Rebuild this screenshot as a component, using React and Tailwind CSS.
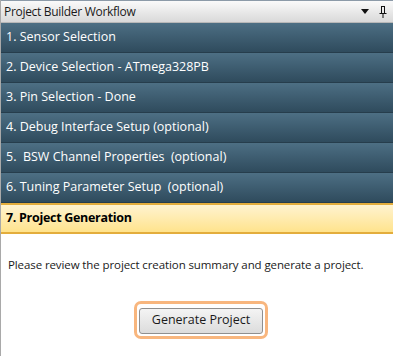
import React from "react";

const STEPS = [
  "1. Sensor Selection",
  "2. Device Selection - ATmega328PB",
  "3. Pin Selection - Done",
  "4. Debug Interface Setup (optional)",
  "5.  BSW Channel Properties  (optional)",
  "6. Tuning Parameter Setup  (optional)",
];

const font = { fontFamily: '"Open Sans", "Noto Sans", sans-serif' };

const Step = ({ label }) => (
  <div className="h-[30px] flex items-center px-[5px] text-[12.5px] text-white bg-gradient-to-b from-[#4d6f84] to-[#2f4b5d] border-b border-[#263d4c] whitespace-pre">
    {label}
  </div>
);

export default function App() {
  return (
    <div className="w-[393px] h-[356px] bg-white border-l border-[#a9a9a9] flex flex-col overflow-hidden" style={font}>
      {/* Header */}
      <div className="h-[23px] flex items-center pl-[3px] pr-[6px] bg-gradient-to-b from-[#fafafa] to-[#d9d9d9] border-t border-[#8c9aa8] border-b border-b-[#b8b8b8]">
        <span className="text-[12px] text-[#1a1a1a] tracking-[-0.3px]">Project Builder Workflow</span>
        <div className="ml-auto flex items-center gap-[10px]">
          <svg width="8" height="5" viewBox="0 0 8 5">
            <path d="M0 0 H8 L4 5 Z" fill="#111" />
          </svg>
          <svg width="8" height="12" viewBox="0 0 8 12">
            <path d="M2 0.5 H6 M2.5 0.5 V7 M5.5 0.5 V7 M0.5 7.5 H7.5 M4 7.5 V12" stroke="#111" strokeWidth="1" fill="none" />
          </svg>
        </div>
      </div>

      {/* Steps */}
      <div className="flex flex-col">
        {STEPS.map((s, i) => <Step key={i} label={s} />)}
        <div className="h-[31px] flex items-center px-[5px] text-[12.5px] font-bold text-black tracking-[-0.3px] bg-gradient-to-b from-[#fff3cf] to-[#ffe38c] border-t-2 border-b-2 border-[#e3ad3c]">
          7. Project Generation
        </div>
      </div>

      {/* Body */}
      <p className="mt-[22px] pl-[7px] text-[11.5px] text-[#1a1a1a] tracking-[-0.1px]">
        Please review the project creation summary and generate a project.
      </p>

      <div className="mt-[28px] flex justify-center pl-[8px]">
        <div className="rounded-[7px] border-[3px] border-[#f8b67e] p-[2px]">
          <button className="w-[124px] h-[26px] rounded-[3px] border border-[#8f8f8f] bg-gradient-to-b from-[#f4f4f4] to-[#dcdcdc] text-[12.5px] text-[#1a1a1a]">
            Generate Project
          </button>
        </div>
      </div>
    </div>
  );
}
